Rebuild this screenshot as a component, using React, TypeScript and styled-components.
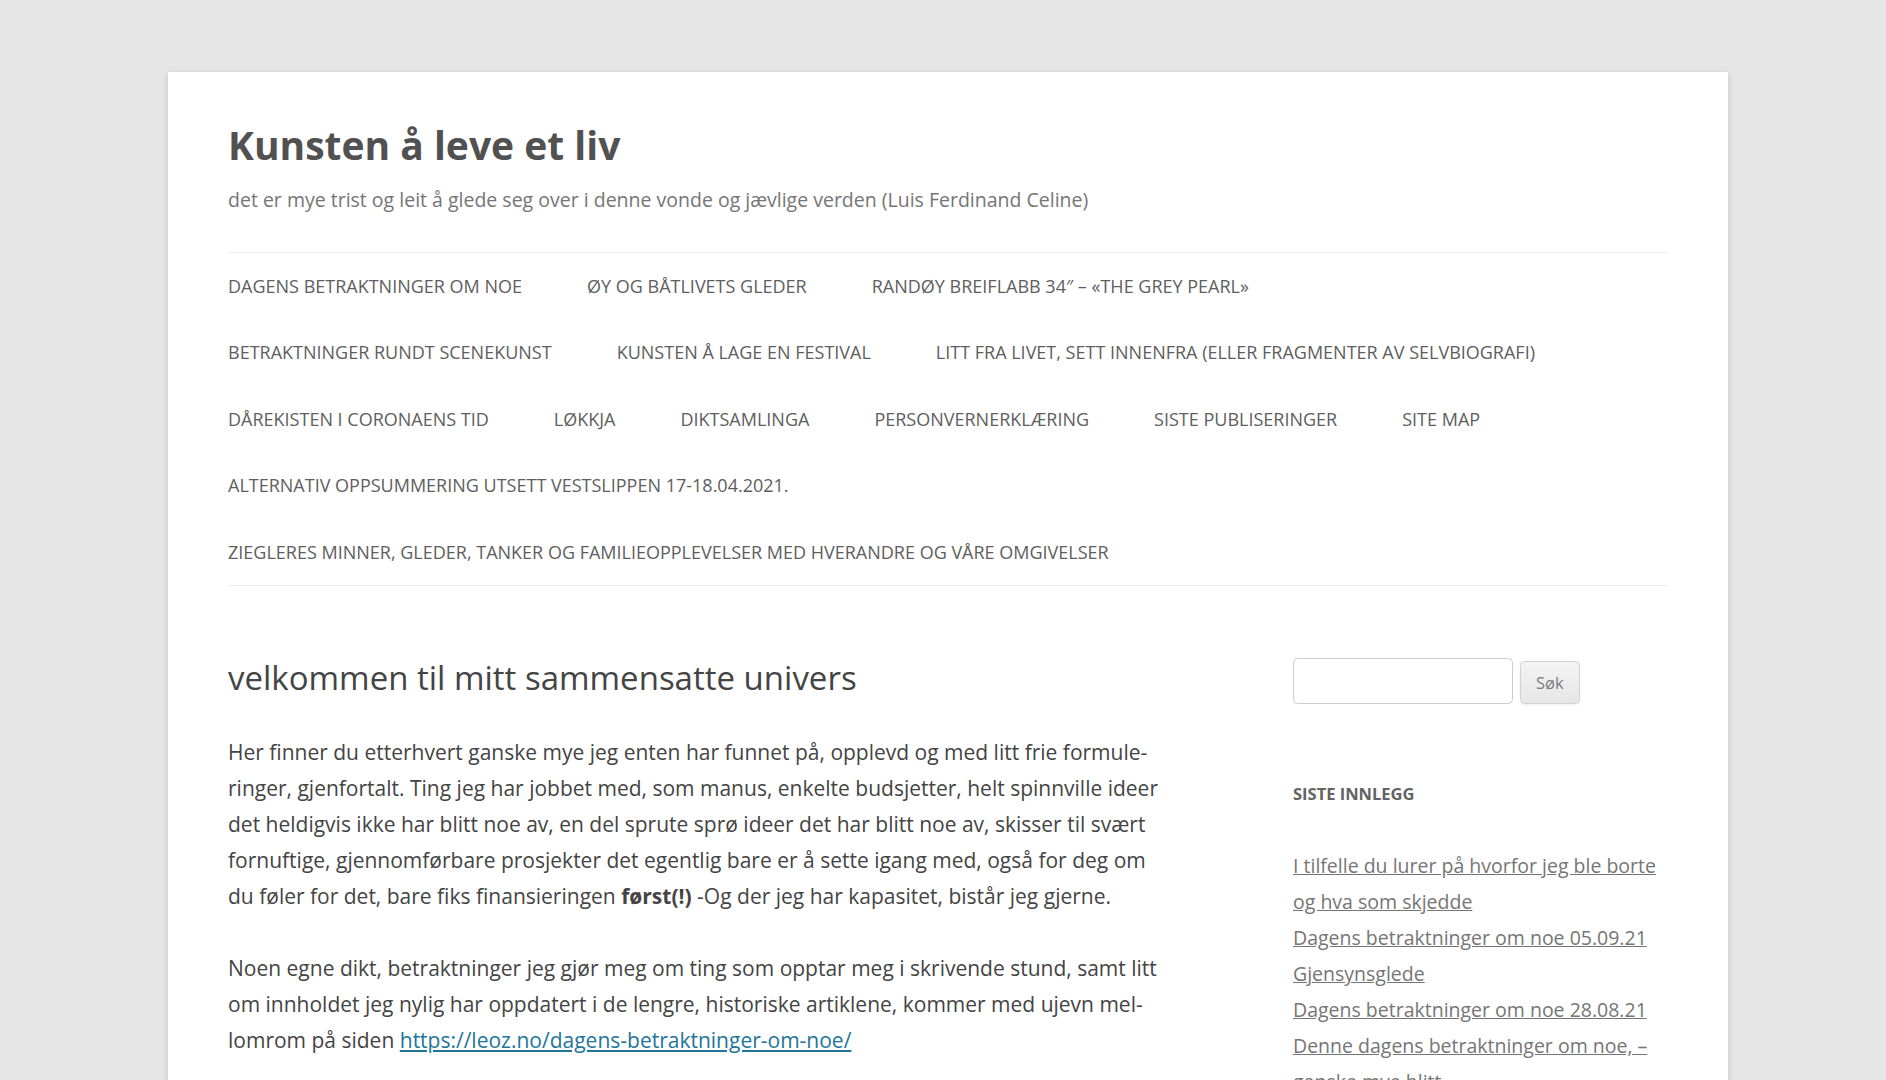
import React from "react";
import styled, { createGlobalStyle } from "styled-components";

const GlobalStyle = createGlobalStyle`
  html, body { margin: 0; padding: 0; }
  body {
    background: #e6e6e6;
    padding-left: 10px;
    font-family: "Open Sans", Helvetica, Arial, sans-serif;
    color: #444;
    text-rendering: optimizeLegibility;
  }
  * { box-sizing: border-box; }
`;

const Site = styled.div`
  box-sizing: content-box;
  max-width: 1440px;
  margin: 72px auto;
  padding: 0 60px 36px;
  background: #fff;
  box-shadow: rgba(100, 100, 100, 0.3) 0 2px 6px;
`;

const Header = styled.header`
  padding-top: 36px;
  padding-bottom: 36px;
`;

const SiteTitle = styled.h1`
  margin: 0;
  font-size: 39px;
  line-height: 74px;
  font-weight: 700;
  color: #515151;
`;

const SiteDescription = styled.h2`
  margin: 0;
  font-size: 19.5px;
  line-height: 36px;
  font-weight: 400;
  color: #757575;
`;

const Nav = styled.nav`
  margin-top: 34px;
  border-top: 1px solid #ededed;
  border-bottom: 1px solid #ededed;
`;

const Menu = styled.ul`
  display: flex;
  flex-wrap: wrap;
  column-gap: 65px;
  max-width: 1380px;
  margin: 0;
  padding: 0;
  list-style: none;
`;

const MenuItem = styled.li`
  white-space: nowrap;
`;

const MenuLink = styled.a`
  display: inline-block;
  font-size: 18px;
  line-height: 66.46px;
  text-transform: uppercase;
  color: #5e5e5e;
  text-decoration: none;
`;

const Main = styled.div`
  display: flex;
  justify-content: space-between;
  align-items: flex-start;
  padding-top: 36px;
`;

const Content = styled.main`
  width: 937.5px;
`;

const EntryTitle = styled.h1`
  margin: 0 0 36px;
  font-size: 33px;
  line-height: 39.6px;
  font-weight: 400;
  color: #444;
`;

const Paragraph = styled.p`
  margin: 0 0 36px;
  font-size: 21px;
  line-height: 36px;
  color: #444;
`;

const ContentLink = styled.a`
  color: #21759b;
  text-decoration: underline;
`;

const Sidebar = styled.aside`
  width: 375px;
`;

const Widget = styled.section`
  margin-bottom: 72px;
  font-size: 19.5px;
  line-height: 36px;
`;

const SearchForm = styled.form`
  display: flex;
  align-items: flex-end;
  gap: 7px;
`;

const SearchInput = styled.input`
  width: 220px;
  height: 46px;
  padding: 9px;
  border: 1px solid #ccc;
  border-radius: 4.5px;
  font-family: inherit;
  font-size: 19.5px;
  color: #666;
  outline: none;
`;

const SearchButton = styled.button`
  height: 43.5px;
  padding: 0 15px;
  border: 1px solid #d2d2d2;
  border-radius: 4.5px;
  background: linear-gradient(to bottom, #f4f4f4, #e6e6e6);
  box-shadow: 0 1px 2px rgba(64, 64, 64, 0.1);
  font-family: inherit;
  font-size: 16.5px;
  line-height: 23.6px;
  color: #7c7c7c;
  cursor: pointer;
`;

const WidgetTitle = styled.h3`
  margin: 0 0 36px;
  font-size: 16.5px;
  line-height: 36px;
  font-weight: 700;
  text-transform: uppercase;
  color: #636363;
`;

const PostList = styled.ul`
  margin: 0;
  padding: 0;
  list-style: none;
`;

const PostItem = styled.li`
  font-size: 19.5px;
  line-height: 36px;
`;

const PostLink = styled.a`
  color: #757575;
  text-decoration: underline;
`;

const menu = [
  "Dagens betraktninger om noe",
  "Øy og båtlivets gleder",
  "Randøy Breiflabb 34″ – «The Grey Pearl»",
  "Betraktninger rundt scenekunst",
  "Kunsten å lage en festival",
  "Litt fra livet, sett innenfra (eller fragmenter av selvbiografi)",
  "Dårekisten i coronaens tid",
  "Løkkja",
  "Diktsamlinga",
  "Personvernerklæring",
  "Siste publiseringer",
  "Site Map",
  "Alternativ oppsummering utsett Vestslippen 17-18.04.2021.",
  "Ziegleres minner, gleder, tanker og familieopplevelser med hverandre og våre omgivelser",
];

const posts = [
  "I tilfelle du lurer på hvorfor jeg ble borte og hva som skjedde",
  "Dagens betraktninger om noe 05.09.21",
  "Gjensynsglede",
  "Dagens betraktninger om noe 28.08.21",
  "Denne dagens betraktninger om noe, – ganske mye blitt",
];

export default function App() {
  return (
    <>
      <GlobalStyle />
      <Site>
        <Header>
          <SiteTitle>Kunsten å leve et liv</SiteTitle>
          <SiteDescription>
            det er mye trist og leit å glede seg over i denne vonde og jævlige verden (Luis Ferdinand Celine)
          </SiteDescription>
          <Nav>
            <Menu>
              {menu.map((m) => (
                <MenuItem key={m}>
                  <MenuLink href="#">{m}</MenuLink>
                </MenuItem>
              ))}
            </Menu>
          </Nav>
        </Header>
        <Main>
          <Content>
            <EntryTitle>velkommen til mitt sammensatte univers</EntryTitle>
            <Paragraph>
              Her finner du etterhvert ganske mye jeg enten har funnet på, opplevd og med litt frie formule&shy;ringer,
              gjenfortalt. Ting jeg har jobbet med, som manus, enkelte budsjetter, helt spinnville ideer det heldigvis
              ikke har blitt noe av, en del sprute sprø ideer det har blitt noe av, skisser til svært fornuftige,
              gjennomførbare prosjekter det egentlig bare er å sette igang med, også for deg om du føler for det, bare
              fiks finansieringen <strong>først(!)</strong> -Og der jeg har kapasitet, bistår jeg gjerne.
            </Paragraph>
            <Paragraph>
              Noen egne dikt, betraktninger jeg gjør meg om ting som opptar meg i skrivende stund, samt litt om
              innholdet jeg nylig har oppdatert i de lengre, historiske artiklene, kommer med ujevn mel&shy;lomrom på
              siden <ContentLink href="#">https://leoz.no/dagens-betraktninger-om-noe/</ContentLink>
            </Paragraph>
          </Content>
          <Sidebar>
            <Widget>
              <SearchForm onSubmit={(e) => e.preventDefault()}>
                <SearchInput type="text" aria-label="Søk" />
                <SearchButton type="submit">Søk</SearchButton>
              </SearchForm>
            </Widget>
            <Widget>
              <WidgetTitle>Siste innlegg</WidgetTitle>
              <PostList>
                {posts.map((p) => (
                  <PostItem key={p}>
                    <PostLink href="#">{p}</PostLink>
                  </PostItem>
                ))}
              </PostList>
            </Widget>
          </Sidebar>
        </Main>
      </Site>
    </>
  );
}
